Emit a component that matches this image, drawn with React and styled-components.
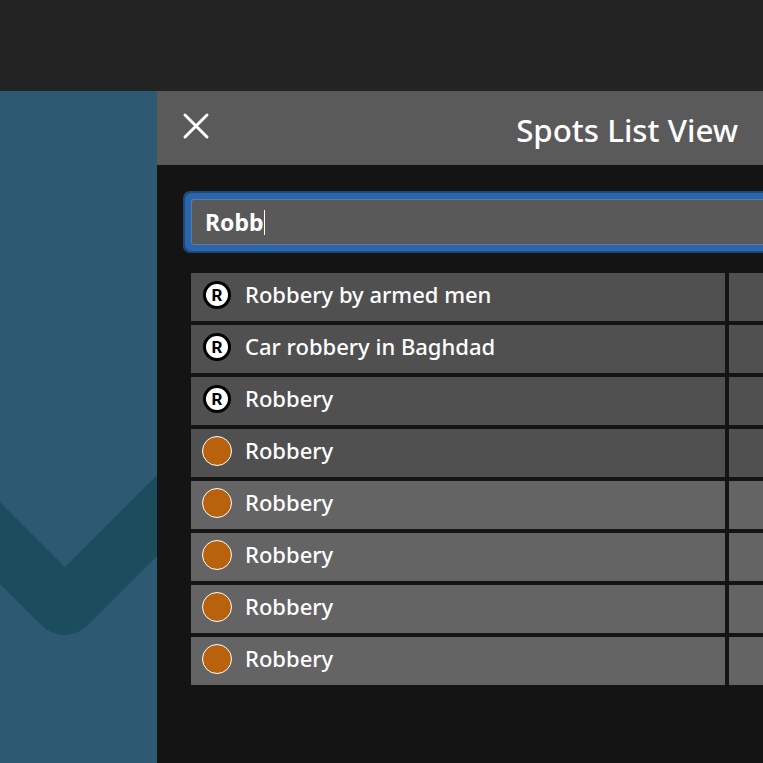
import React from 'react';
import styled, {createGlobalStyle} from 'styled-components';

const GlobalStyle = createGlobalStyle`
    html, body {
        margin: 0;
        height: 100%;
        overflow: hidden;
        background-color: #141414;
    }
    #root {
        height: 100%;
    }
`
const Page = styled.div`
    display: flex;
    flex-direction: column;
    height: 100vh;
    font-family: "Noto Sans", "Open Sans", sans-serif;
    color: #fff;
`
const TopBar = styled.div`
    height: 91px;
    flex-shrink: 0;
    background-color: #232323;
`
const Content = styled.div`
    display: flex;
    flex: 1;
    min-height: 0;
`
const SidePanel = styled.div`
    width: 157px;
    flex-shrink: 0;
    background-color: #2d5a72;
    overflow: hidden;
    svg {
        display: block;
    }
`
const Panel = styled.div`
    flex: 1;
    min-width: 0;
    display: flex;
    flex-direction: column;
    overflow: hidden;
    background-color: #141414;
`
const Header = styled.div`
    height: 74px;
    flex-shrink: 0;
    box-sizing: border-box;
    padding: 0 25px;
    display: flex;
    align-items: center;
    justify-content: space-between;
    background-color: #5a5a5a;
`
const CloseButton = styled.div`
    width: 28px;
    height: 28px;
    margin-bottom: 5px;
`
const Title = styled.div`
    font-size: 31.3px;
    font-weight: 500;
    margin-top: 3px;
`
const Body = styled.div`
    width: 900px;
    padding: 35px 0 0 35px;
`
const SearchBox = styled.div`
    height: 44px;
    box-sizing: border-box;
    padding-left: 13px;
    display: flex;
    align-items: center;
    background-color: #595959;
    font-size: 23px;
    font-weight: 700;
    box-shadow: 0 0 0 1px #5d7b9e, 0 0 0 7px #2a66ad, 0 0 0 9px #1f4877;
    border-radius: 2px;
`
const Caret = styled.span`
    display: inline-block;
    width: 1px;
    height: 25px;
    background-color: #fff;
`
const List = styled.div`
    margin: 29px 0 0 -1px;
    display: flex;
    flex-direction: column;
    gap: 4px;
`
const Row = styled.div`
    display: flex;
    gap: 4px;
    height: 48px;
`
const NameCell = styled.div`
    width: 534px;
    flex-shrink: 0;
    box-sizing: border-box;
    padding: 0 0 4px 11px;
    display: flex;
    align-items: center;
    font-size: 22px;
    font-weight: 500;
    background-color: ${(props) => props.$light ? '#646464' : '#505050'};
`
const SpotName = styled.span`
    margin: 0 0 2px 13px;
`
const ExtraCell = styled.div`
    flex: 1;
    background-color: ${(props) => props.$light ? '#646464' : '#505050'};
`
const Badge = styled.div`
    width: ${(props) => props.$robbery ? '28px' : '30px'};
    height: ${(props) => props.$robbery ? '28px' : '30px'};
    margin: ${(props) => props.$robbery ? '0 1px' : '0'};
    flex-shrink: 0;
    box-sizing: border-box;
    border-radius: 50%;
    display: flex;
    align-items: center;
    justify-content: center;
    border: ${(props) => props.$robbery ? '3px solid #000' : '1px solid #fff'};
    background-color: ${(props) => props.$robbery ? '#fff' : '#b8620e'};
    color: #000;
    font-family: Roboto, sans-serif;
    font-size: 17px;
    font-weight: 700;
`

const spots = [
    {name: 'Robbery by armed men', marked: true},
    {name: 'Car robbery in Baghdad', marked: true},
    {name: 'Robbery', marked: true},
    {name: 'Robbery', marked: false},
    {name: 'Robbery', marked: false, light: true},
    {name: 'Robbery', marked: false, light: true},
    {name: 'Robbery', marked: false, light: true},
    {name: 'Robbery', marked: false, light: true},
];

const App = () => {
    return (
        <Page>
            <GlobalStyle/>
            <TopBar/>
            <Content>
                <SidePanel>
                    <svg width="157" height="672" viewBox="0 91 157 672">
                        <path fill="#1b4d5c" d="M0 502 L65 567 L157 475 L157 556 L87.5 625.5 A32.6 32.6 0 0 1 41.5 625.5 L0 584 Z"/>
                    </svg>
                </SidePanel>
                <Panel>
                    <Header>
                        <CloseButton>
                            <svg width="28" height="28" viewBox="0 0 28 28">
                                <path d="M3 3 L25 25 M25 3 L3 25" stroke="#fff" strokeWidth="3" strokeLinecap="round"/>
                            </svg>
                        </CloseButton>
                        <Title>Spots List View</Title>
                    </Header>
                    <Body>
                        <SearchBox>Robb<Caret/></SearchBox>
                        <List>
                            {spots.map((spot, i) => (
                                <Row key={i}>
                                    <NameCell $light={spot.light}>
                                        <Badge $robbery={spot.marked}>{spot.marked && 'R'}</Badge>
                                        <SpotName>{spot.name}</SpotName>
                                    </NameCell>
                                    <ExtraCell $light={spot.light}/>
                                </Row>
                            ))}
                        </List>
                    </Body>
                </Panel>
            </Content>
        </Page>
    );
};

export default App;
